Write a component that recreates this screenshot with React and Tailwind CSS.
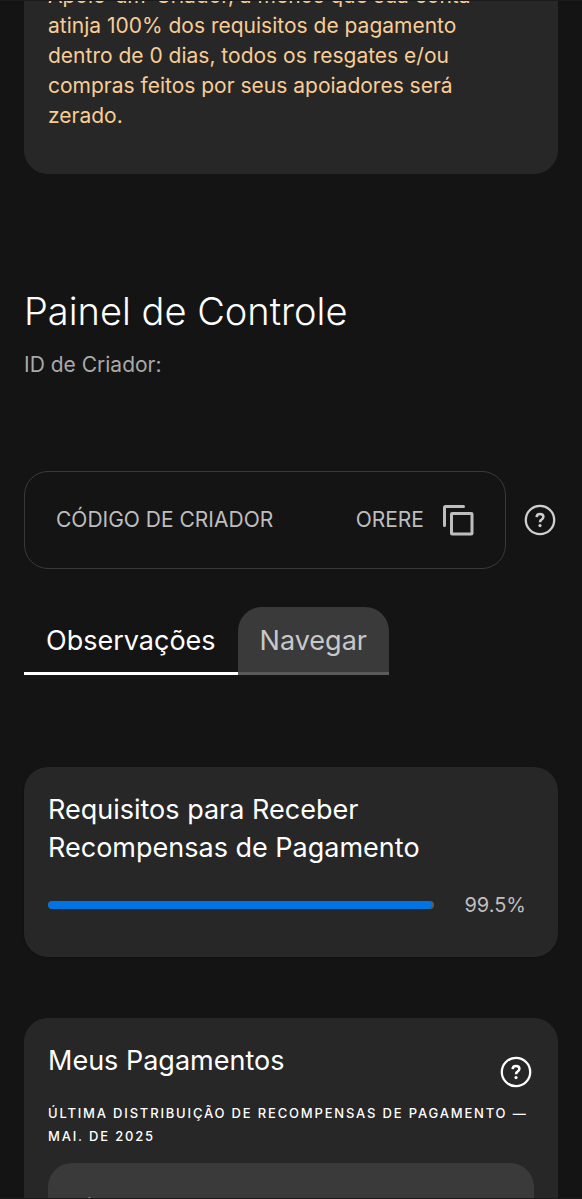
import React from "react";

function HelpIcon() {
  return (
    <svg viewBox="0 0 32 32" className="block size-8" fill="none" stroke="currentColor" aria-hidden="true">
      <circle cx="16" cy="16" r="14.2" strokeWidth="2.3" />
      <path d="M12.6 13.1c.1-2 1.5-3.2 3.4-3.2 2 0 3.4 1.2 3.4 2.9 0 1.4-.8 2.1-1.8 2.8-1.1.7-1.6 1.2-1.6 2.6" strokeWidth="2.5" />
      <circle cx="16" cy="21.6" r="1.6" fill="currentColor" stroke="none" />
    </svg>
  );
}

function CopyIcon() {
  return (
    <svg viewBox="0 0 32 32" className="block size-8" fill="none" stroke="currentColor" strokeWidth="3" strokeLinejoin="round" strokeLinecap="round" aria-hidden="true">
      <path d="M2.5 21.5V3.5a1 1 0 0 1 1-1H21.5" />
      <rect x="9.5" y="9.5" width="20.5" height="20.5" rx="0.6" />
    </svg>
  );
}

function Notice() {
  return (
    <section className="rounded-b-3xl bg-[#272727] pr-12 pb-[43px] pl-6 text-[21px] leading-[30px] text-[#f8cd96]">
      <p>
        Apoie-um-Criador, a menos que sua conta atinja 100% dos requisitos de pagamento dentro de 0 dias, todos os
        resgates e/ou compras feitos por seus apoiadores será zerado.
      </p>
    </section>
  );
}

function CreatorCode() {
  return (
    <div className="flex items-center gap-[18px] pr-0.5">
      <div className="flex grow items-center justify-between rounded-3xl border border-[#3a3a3a] px-[31px] py-8 text-[21px] leading-8 text-[#bebebe]">
        <span>CÓDIGO DE CRIADOR</span>
        <div className="flex items-center gap-[18px]">
          <span>ORERE</span>
          <button type="button" aria-label="Copiar código">
            <CopyIcon />
          </button>
        </div>
      </div>
      <button type="button" aria-label="Ajuda" className="text-[#cfcfcf]">
        <HelpIcon />
      </button>
    </div>
  );
}

function Tabs() {
  return (
    <div role="tablist" className="flex text-[27px] leading-8">
      <button type="button" role="tab" aria-selected="true" className="border-b-[3px] border-white px-[22px] pt-[18px] pb-[15px] text-white">
        Observações
      </button>
      <button type="button" role="tab" aria-selected="false" className="rounded-t-3xl border-b-[3px] border-[#5a5a5a] bg-[#3a3a3a] px-[22px] pt-[18px] pb-[15px] text-[#c8c8c8]">
        Navegar
      </button>
    </div>
  );
}

function Requirements({ value }) {
  return (
    <section className="rounded-3xl bg-[#272727] px-6 pt-6 pb-[37px] shadow-sm">
      <h2 className="text-[27px] leading-[38px] text-white">Requisitos para Receber Recompensas de Pagamento</h2>
      <div className="mt-[23px] flex items-center gap-[30px] pr-2">
        <div
          role="progressbar"
          aria-label="Requisitos"
          aria-valuenow={value}
          aria-valuemin={0}
          aria-valuemax={100}
          className="h-2 grow overflow-hidden rounded-full bg-[#5a5a5a]"
        >
          <div className="h-full rounded-full bg-[#0074e4]" style={{ width: `${value}%` }} />
        </div>
        <span className="text-xl leading-[30px] text-[#bebebe]">{value}%</span>
      </div>
    </section>
  );
}

function Payments() {
  return (
    <section className="rounded-t-3xl bg-[#272727] px-6 pt-6 text-white">
      <div className="flex items-start justify-between pr-0.5">
        <h2 className="text-[27px] leading-[38px]">Meus Pagamentos</h2>
        <button type="button" aria-label="Ajuda" className="mt-3.5">
          <HelpIcon />
        </button>
      </div>
      <h3 className="mt-3.5 text-[13px] leading-[23px] font-medium tracking-[0.14em] uppercase">
        Última distribuição de recompensas de pagamento — mai. de 2025
      </h3>
      <div className="mt-[15px] rounded-t-3xl bg-[#3a3a3a] px-8 pt-[33px] text-[21px] leading-[30px] text-[#bebebe]">
        <p>Última</p>
      </div>
    </section>
  );
}

export default function App() {
  return (
    <div className="h-screen overflow-hidden border-y border-[#1b1b1b] bg-[#141414] px-6 font-['Inter','Liberation_Sans',sans-serif] antialiased">
      <main className="-mt-5">
        <Notice />
        <header className="mt-[109px]">
          <h1 className="text-[38px] leading-[56px] font-light text-white">Painel de Controle</h1>
          <p className="mt-3 text-[21px] leading-[28px] text-[#a9a9a9]">ID de Criador:</p>
        </header>
        <div className="mt-[92px]">
          <CreatorCode />
        </div>
        <div className="mt-[38px]">
          <Tabs />
        </div>
        <div className="mt-[92px]">
          <Requirements value={99.5} />
        </div>
        <div className="mt-[61px]">
          <Payments />
        </div>
      </main>
    </div>
  );
}
